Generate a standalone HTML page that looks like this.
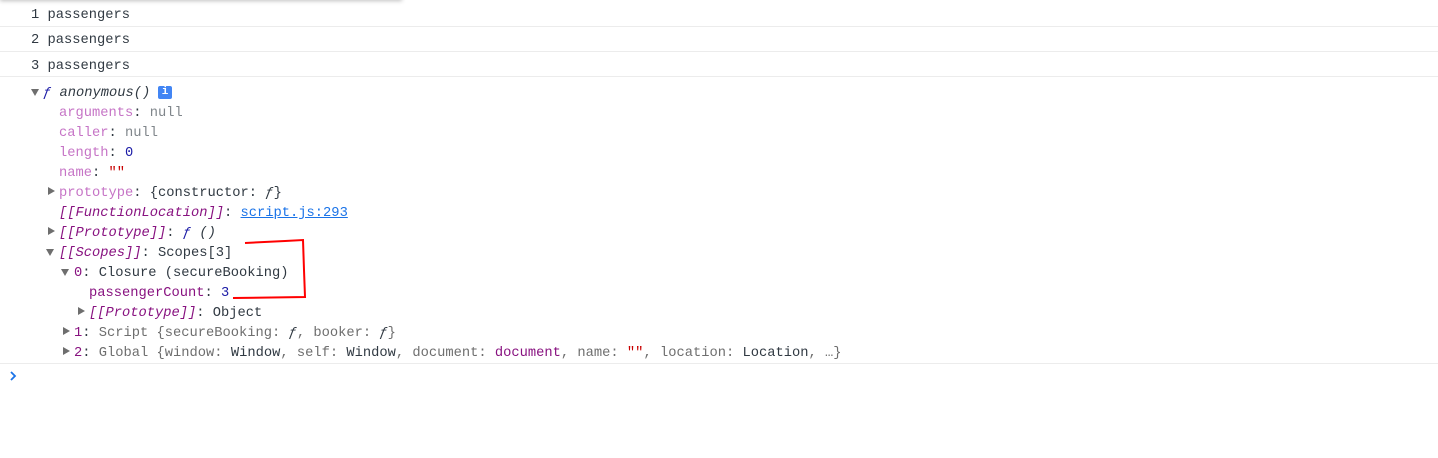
<!DOCTYPE html>
<html><head><style>
body{margin:0;width:1438px;height:458px;background:#fff;overflow:hidden;position:relative;font-family:"Liberation Mono",monospace;font-size:13.75px;color:#303942}
.l{position:absolute;white-space:pre;line-height:16px}
.sep{position:absolute;left:0;width:1438px;height:1px;background:#ececec}
.p{color:#881280}.d{color:#c674c6}.i{font-style:italic}
.g{color:#80868b}.n{color:#1a1aa6}.s{color:#c80000}.k{color:#6e6e6e}
.a{color:#1a73e8;text-decoration:underline}
.t{position:absolute;width:0;height:0}
.td{border-left:4px solid transparent;border-right:4px solid transparent;border-top:7px solid #6e6e6e}
.tr{border-top:4px solid transparent;border-bottom:4px solid transparent;border-left:7px solid #6e6e6e}
</style></head><body>
<div style="position:absolute;left:0;top:-6px;width:402px;height:6px;box-shadow:0 1px 4px rgba(0,0,0,.25)"></div>
<div class="l" style="left:31px;top:8px">1 passengers</div>
<div class="sep" style="top:26px"></div>
<div class="l" style="left:31px;top:33px">2 passengers</div>
<div class="sep" style="top:51px"></div>
<div class="l" style="left:31px;top:59px">3 passengers</div>
<div class="sep" style="top:76px"></div>

<div class="t td" style="left:31px;top:89px"></div>
<div class="l" style="left:43px;top:86px"><span class="i" style="color:#1a1aa6">ƒ</span> <span class="i">anonymous()</span></div>
<div style="position:absolute;left:158px;top:86px;width:14px;height:13px;background:#4285f4;border-radius:2px;color:#fff;font-size:11px;line-height:13px;text-align:center;font-weight:bold">i</div>
<div class="l" style="left:59px;top:106px"><span class="d">arguments</span>: <span class="g">null</span></div>
<div class="l" style="left:59px;top:126px"><span class="d">caller</span>: <span class="g">null</span></div>
<div class="l" style="left:59px;top:146px"><span class="d">length</span>: <span class="n">0</span></div>
<div class="l" style="left:59px;top:166px"><span class="d">name</span>: <span class="s">""</span></div>
<div class="t tr" style="left:48px;top:187px"></div>
<div class="l" style="left:59px;top:186px"><span class="d">prototype</span>: {constructor: <span class="i">ƒ</span>}</div>
<div class="l" style="left:59px;top:206px"><span class="p i">[[FunctionLocation]]</span>: <span class="a">script.js:293</span></div>
<div class="t tr" style="left:48px;top:227px"></div>
<div class="l" style="left:59px;top:226px"><span class="p i">[[Prototype]]</span>: <span class="i" style="color:#1a1aa6">ƒ</span> <span class="i">()</span></div>
<div class="t td" style="left:46px;top:249px"></div>
<div class="l" style="left:59px;top:246px"><span class="p i">[[Scopes]]</span>: Scopes[3]</div>
<div class="t td" style="left:61px;top:269px"></div>
<div class="l" style="left:74px;top:266px"><span class="p">0</span>: Closure (secureBooking)</div>
<div class="l" style="left:89px;top:286px"><span class="p">passengerCount</span>: <span class="n">3</span></div>
<div class="t tr" style="left:78px;top:307px"></div>
<div class="l" style="left:89px;top:306px"><span class="p i">[[Prototype]]</span>: Object</div>
<div class="t tr" style="left:63px;top:327px"></div>
<div class="l" style="left:74px;top:326px"><span class="p">1</span>: <span class="k">Script {secureBooking: <span style="color:#303942" class="i">ƒ</span>, booker: <span style="color:#303942" class="i">ƒ</span>}</span></div>
<div class="t tr" style="left:63px;top:347px"></div>
<div class="l" style="left:74px;top:346px"><span class="p">2</span>: <span class="k">Global {window: <span style="color:#303942">Window</span>, self: <span style="color:#303942">Window</span>, document: <span class="p">document</span>, name: <span class="s">""</span>, location: <span style="color:#303942">Location</span>, …}</span></div>
<div class="sep" style="top:363px"></div>
<svg style="position:absolute;left:0;top:0" width="1438" height="458">
<path d="M245 243 L285 241 L303 240 L304 270 L305 297 L233 298" fill="none" stroke="#f00" stroke-width="2"/>
<path d="M11 372 L15 376 L11 380" fill="none" stroke="#1a73e8" stroke-width="1.8"/>
</svg>
</body></html>
